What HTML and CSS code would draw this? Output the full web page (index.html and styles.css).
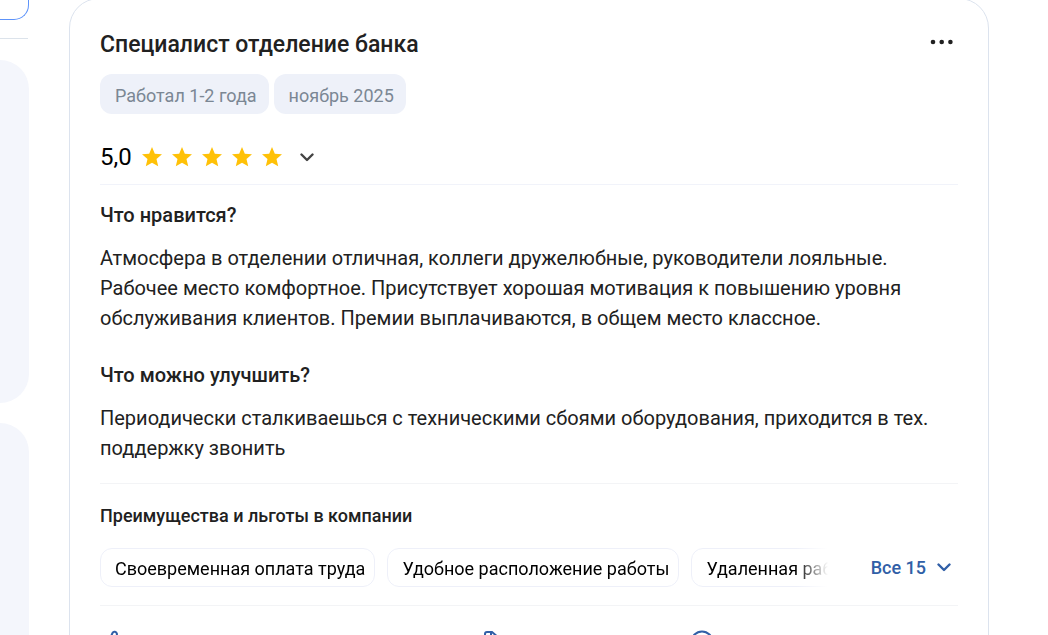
FILE: index.html
```html
<!DOCTYPE html>
<html lang="ru">
<head>
<meta charset="utf-8">
<meta name="viewport" content="width=device-width, initial-scale=1">
<title>Специалист отделение банка</title>
<link rel="stylesheet" href="styles.css">
</head>
<body>
<svg class="sprite" aria-hidden="true">
  <symbol id="star" viewBox="0 0 20 20"><path d="M10 0l2.800 6.700 7.200.6-5.500 4.700 1.700 7.200L10 15.800l-6.200 3.400L5.500 12 0 7.300l7.200-.6z"/></symbol>
  <symbol id="chevron" viewBox="0 0 14 9"><path d="M1.500 1.500L7 7l5.500-5.500" fill="none" stroke="currentColor" stroke-width="2.400" stroke-linecap="round" stroke-linejoin="round"/></symbol>
</svg>
<div class="layout">
  <aside class="sidebar">
    <div class="sidebar-action"></div>
    <hr class="sidebar-line">
    <div class="sidebar-block"></div>
    <div class="sidebar-block"></div>
  </aside>
  <article class="card">
    <header class="card-head">
      <h2 class="title">Специалист отделение банка</h2>
      <button class="more" type="button" aria-label="Меню"><svg width="24" height="6" viewBox="0 0 24 6"><circle cx="3" cy="3" r="2.300"/><circle cx="11.700" cy="3" r="2.300"/><circle cx="20.400" cy="3" r="2.300"/></svg></button>
    </header>
    <div class="tags"><span class="tag">Работал 1-2 года</span><span class="tag">ноябрь 2025</span></div>
    <div class="rating">
      <span class="score">5,0</span>
      <span class="stars">
        <svg class="star"><use href="#star"/></svg><svg class="star"><use href="#star"/></svg><svg class="star"><use href="#star"/></svg><svg class="star"><use href="#star"/></svg><svg class="star"><use href="#star"/></svg>
      </span>
      <button class="toggle" type="button" aria-label="Показать оценки"><svg class="chevron"><use href="#chevron"/></svg></button>
    </div>
    <section class="review">
      <h3 class="question">Что нравится?</h3>
      <p class="answer">Атмосфера в отделении отличная, коллеги дружелюбные, руководители лояльные. Рабочее место комфортное. Присутствует хорошая мотивация к повышению уровня обслуживания клиентов. Премии выплачиваются, в общем место классное.</p>
      <h3 class="question">Что можно улучшить?</h3>
      <p class="answer">Периодически сталкиваешься с техническими сбоями оборудования, приходится в тех. поддержку звонить</p>
    </section>
    <section class="benefits">
      <h4 class="benefits-title">Преимущества и льготы в компании</h4>
      <div class="benefits-row">
        <div class="chips"><span class="chip">Своевременная оплата труда</span><span class="chip">Удобное расположение работы</span><span class="chip">Удаленная работа</span></div>
        <button class="all" type="button">Все 15 <svg class="chevron"><use href="#chevron"/></svg></button>
      </div>
    </section>
    <footer class="actions">
      <button class="action" type="button" aria-label="Полезно"><svg width="24" height="24" viewBox="0 0 24 24"><path d="M3 11h4l3.500-8c1-2 4-1.500 4.500 1l-1 5h6l-1 12H3z"/></svg></button>
      <button class="action" type="button" aria-label="Документ"><svg width="24" height="24" viewBox="0 0 24 24"><path d="M5 22V4q0-2 2-2h5l7 6v14z M11 2v6h6"/></svg></button>
      <button class="action" type="button" aria-label="Комментарии"><svg width="24" height="24" viewBox="0 0 24 24"><circle cx="12" cy="12" r="10.500"/></svg></button>
    </footer>
  </article>
</div>
</body>
</html>
```
FILE: styles.css
```css
* { box-sizing: border-box; }
body {
  margin: 0;
  height: 100vh;
  overflow: hidden;
  background: #fff;
  color: #212121;
  font-family: Roboto, "Noto Sans", sans-serif;
}
h2, h3, h4, p, hr { margin: 0; font-weight: 500; }
button { padding: 0; border: 0; background: none; color: inherit; font: inherit; cursor: pointer; }
svg { display: block; }
.sprite { display: none; }
.layout { display: flex; gap: 40px; padding-right: 59px; }
.sidebar { flex: 0 0 29px; display: flex; flex-direction: column; }
.sidebar-action {
  height: 20px;
  border: solid #5d93fa;
  border-width: 0 1px 1px 0;
  border-radius: 0 0 15px 0;
}
.sidebar-line { margin: 18px 1px 21px 0; border: 0; border-top: 1px solid #dce3eb; }
.sidebar-block {
  height: 343px;
  margin-bottom: 20px;
  border-radius: 0 30px 30px 0;
  background: #f4f6fc;
}
.card {
  flex: 1;
  min-width: 0;
  margin-top: -2px;
  padding: 30px;
  border: 1px solid #dce3ee;
  border-radius: 30px;
}
.card-head { display: flex; justify-content: space-between; align-items: flex-start; padding-right: 4px; }
.title { font-size: 23px; line-height: 32px; }
.more { padding: 10px 0; fill: #212121; }
.tags { display: flex; gap: 5px; margin-top: 13px; }
.tag {
  padding: 4px 12px 0 15px;
  border-radius: 12px;
  background: #eef1f9;
  color: #7b8794;
  font-size: 18px;
  line-height: 36px;
}
.tag, .chip { white-space: nowrap; }
.rating {
  display: flex;
  align-items: center;
  margin-top: 28px;
  padding-bottom: 12px;
  border-bottom: 1px solid #f1f3fa;
}
.score { font-size: 24px; line-height: 30px; color: #000; }
.stars { display: flex; gap: 10px; margin-left: 10px; }
.star { width: 20px; height: 20px; fill: #ffc107; }
.toggle { margin-left: 18px; color: #444; }
.chevron { width: 14px; height: 9px; }
.review { padding: 15px 0 20px; border-bottom: 1px solid #f3f4f6; }
.question { font-size: 20px; line-height: 30px; }
.answer { margin-top: 13px; font-size: 20px; line-height: 30px; font-weight: 400; }
.answer + .question { margin-top: 27px; }
.benefits { padding: 20px 0 18px; border-bottom: 1px solid #f3f4f6; }
.benefits-title { font-size: 18px; line-height: 24px; }
.benefits-row { display: flex; justify-content: space-between; margin-top: 20px; }
.chips {
  flex: 0 1 728px;
  min-width: 0;
  display: flex;
  gap: 12px;
  overflow: hidden;
  mask-image: linear-gradient(to right, #000 calc(100% - 32px), transparent);
}
.chip {
  padding: 2px 9px 0 14px;
  border: 1px solid #eef0f9;
  border-radius: 12px;
  color: #000;
  font-size: 18px;
  line-height: 35px;
}
.all {
  display: flex;
  align-items: center;
  gap: 11px;
  padding-right: 7px;
  color: #315fa7;
  font-size: 18px;
  font-weight: 500;
}
.actions { display: flex; gap: 186px; padding: 24px 2px; }
.action:first-child { flex: 0 0 192px; }
.action svg { fill: none; stroke: #315fa7; stroke-width: 2; }
```
